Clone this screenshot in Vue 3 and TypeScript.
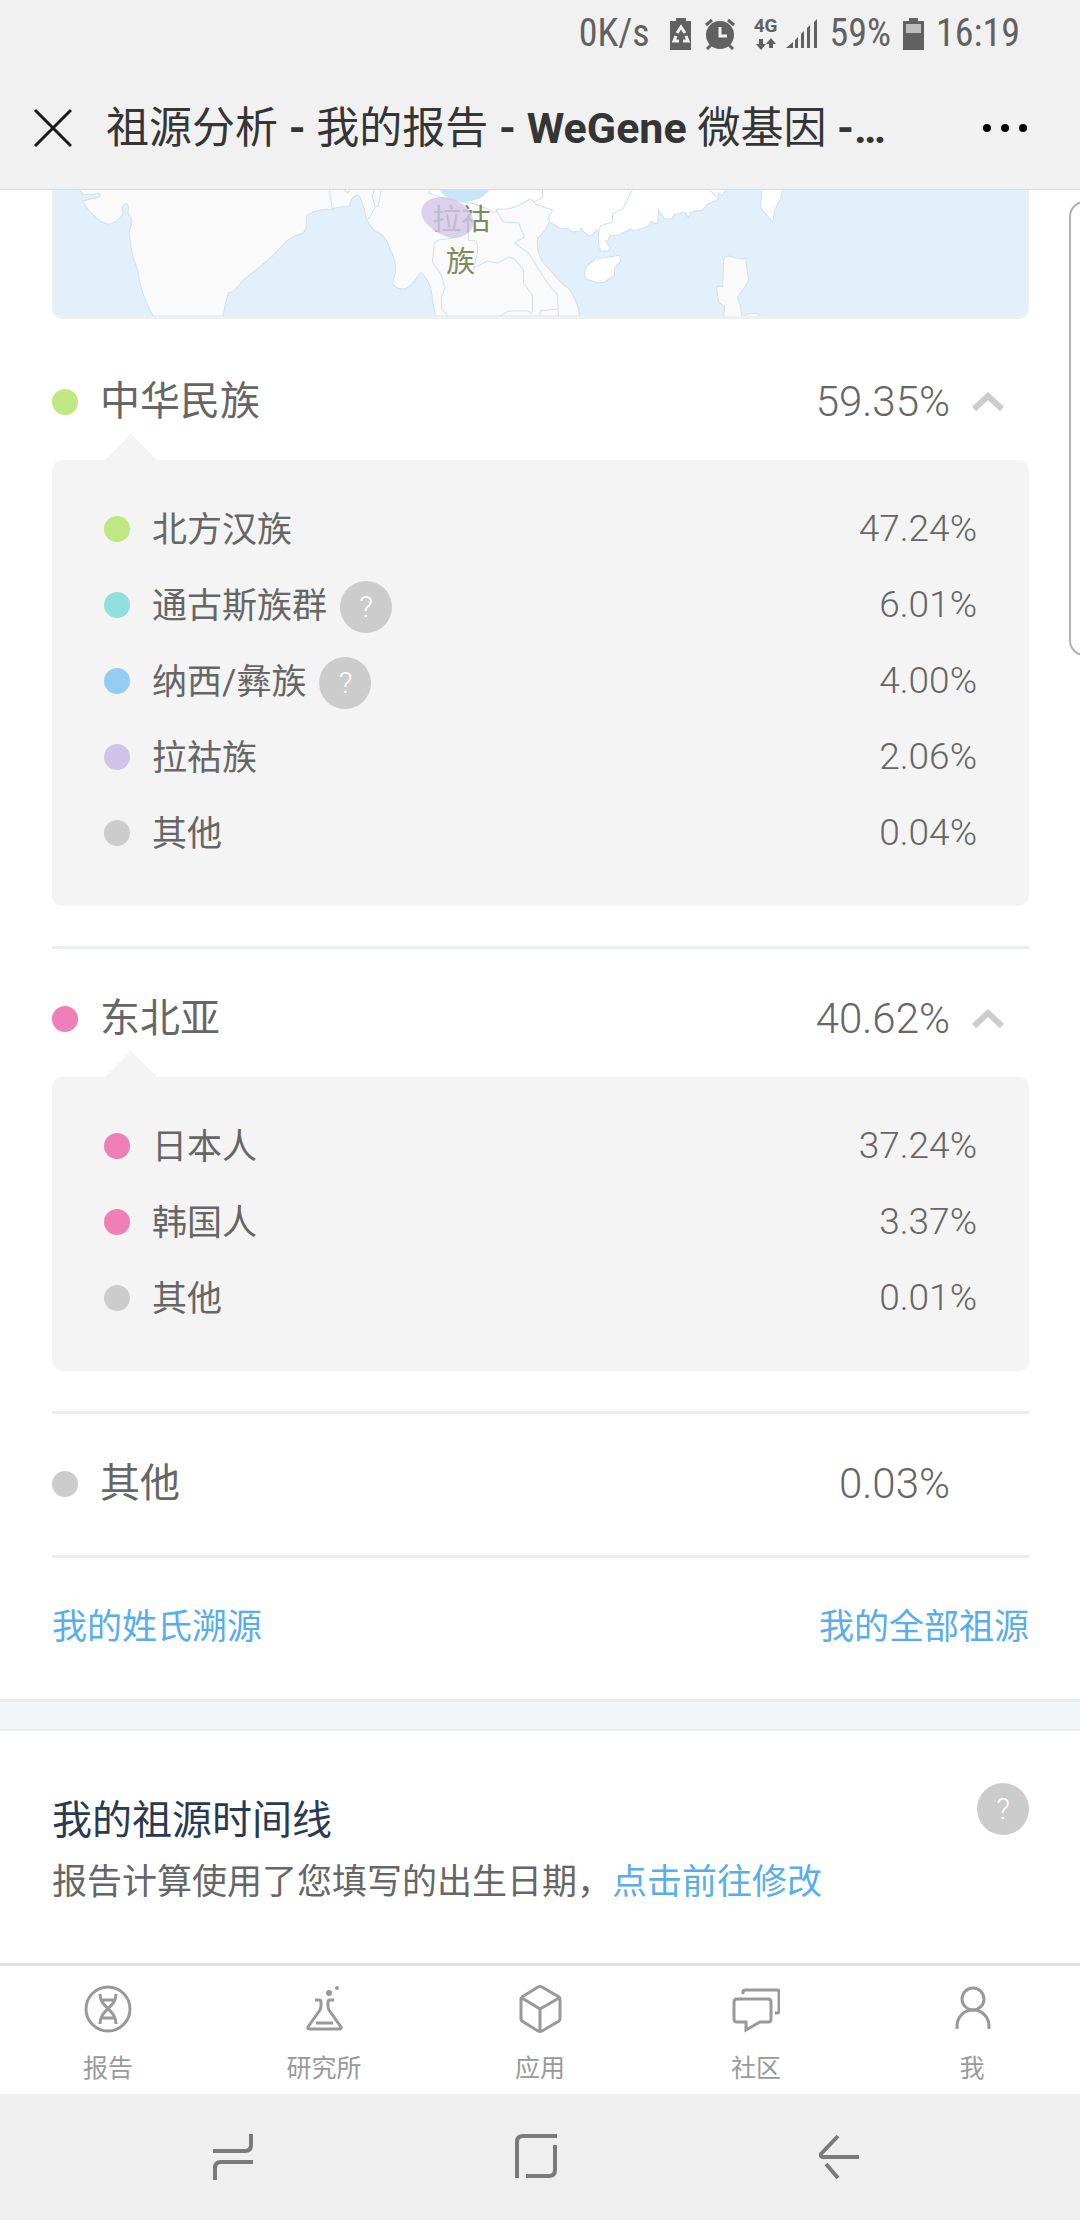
<script setup lang="ts">
import { reactive } from 'vue'

interface Item {
  name: string
  value: string
  color: string
  help?: boolean
}

interface Group extends Item {
  open: boolean
  items: Item[]
}

const groups = reactive<Group[]>([
  {
    name: '中华民族',
    value: '59.35%',
    color: '#c0e882',
    open: true,
    items: [
      { name: '北方汉族', value: '47.24%', color: '#c0e882' },
      { name: '通古斯族群', value: '6.01%', color: '#8fdfdf', help: true },
      { name: '纳西/彝族', value: '4.00%', color: '#93cef2', help: true },
      { name: '拉祜族', value: '2.06%', color: '#d0c4ea' },
      { name: '其他', value: '0.04%', color: '#cccccc' },
    ],
  },
  {
    name: '东北亚',
    value: '40.62%',
    color: '#ee80b7',
    open: true,
    items: [
      { name: '日本人', value: '37.24%', color: '#ee80b7' },
      { name: '韩国人', value: '3.37%', color: '#ee80b7' },
      { name: '其他', value: '0.01%', color: '#cccccc' },
    ],
  },
  { name: '其他', value: '0.03%', color: '#cccccc', open: false, items: [] },
])

function toggle(group: Group) {
  if (group.items.length) group.open = !group.open
}
</script>

<template>
  <div class="app">
    <header class="top">
      <div class="status">
        <span class="speed">0K/s</span>
        <svg class="st-battery" width="22" height="32" viewBox="0 0 22 32">
          <path d="M6 0h10v3h5v29H0V3h6z" fill="#616161" />
          <g fill="none" stroke="#f1f1f1" stroke-width="3">
            <path d="M7 15l4-6 4 6" />
            <path d="M16 18l2 5h-5" />
            <path d="M6 18l-2 5h5" />
          </g>
        </svg>
        <svg class="st-alarm" width="32" height="32" viewBox="0 0 32 32">
          <circle cx="16" cy="17" r="14" fill="#616161" />
          <path d="M2 7l6-5M30 7l-6-5M3 31l4-4M29 31l-4-4" stroke="#616161" stroke-width="3" fill="none" />
          <path d="M16 9v9h7" stroke="#f1f1f1" stroke-width="3" fill="none" />
        </svg>
        <span class="net">
          <span class="net-type">4G</span>
          <svg width="20" height="12" viewBox="0 0 20 12" fill="#616161">
            <path d="M3 1h4v5h3l-5 6-5-6h3z" />
            <path d="M13 10h4V6h3l-5-6-5 6h3z" />
          </svg>
        </span>
        <svg class="st-signal" width="32" height="30" viewBox="0 0 32 30" fill="#616161">
          <path d="M0 29l7-6v6zM9 21l3-3v11H9zM15 15l3-3v17h-3zM21 9l3-3v23h-3zM28 3l3-3v29h-3z" />
        </svg>
        <span class="level">59%</span>
        <svg class="st-charge" width="21" height="32" viewBox="0 0 21 32">
          <path d="M6 0h9v3h6v29H0V3h6z" fill="#616161" />
          <path d="M3 6h15v9H3z" fill="#bdbdbd" />
        </svg>
        <span class="clock">16:19</span>
      </div>
      <div class="bar">
        <button class="icon-btn close" type="button" aria-label="关闭">
          <svg width="38" height="38" viewBox="0 0 38 38" fill="none" stroke="#1a1a1a" stroke-width="3">
            <path d="M1 1l36 36M37 1L1 37" />
          </svg>
        </button>
        <h1 class="title">祖源分析<b> - </b>我的报告<b> - WeGene </b>微基因<b> -…</b></h1>
        <button class="icon-btn more" type="button" aria-label="更多">
          <svg width="46" height="10" viewBox="0 0 46 10">
            <circle cx="5" cy="5" r="4" />
            <circle cx="23" cy="5" r="4" />
            <circle cx="41" cy="5" r="4" />
          </svg>
        </button>
      </div>
    </header>

    <main class="content">
      <section class="origin">
        <div class="map">
          <svg viewBox="0 0 970 126" preserveAspectRatio="xMidYMid slice" stroke="#cfe1ed" stroke-width="1">
            <path
              fill="#fafafa"
              d="M24 -1L28 4 35 5 40 4Q45 2 45 5 45 8 42 8L35 9 28 11Q30 17 40 27 47 34 54 34 62 33 68 24L67 18Q69 13 72 14 74 15 73 23L77 31 74 43 76 57Q77 66 82 78 86 106 98 126H168L170 115 173 103Q180 102 188 90L213 70Q222 62 230 52 236 47 248 43L251 38V27Q252 23 265 20L277 19Q284 16 290 17 295 17 295 13 297 6 302 5 306 6 309 20 312 36 321 42 330 44 335 60 341 70 340 82L337 94Q342 99 348 99 354 99 365 83 366 81 373 92 377 102 377 110L380 126H524Q523 112 513 98L507 94 488 73Q481 64 482 48 489 43 494 32L497 20 485 -1Z"
            />
            <path
              fill="#ffffff"
              d="M375 -1L373 3 387 8 420 14 430 18 438 23 443 19 453 19 462 16 475 9 480 14 497 20 493 27 494 32 506 39 511 38 518 42 524 41 526 38 528 42 532 45 535 46 541 40 543 43 543 53 545 61H553L555 58 550 51 553 50 554 46 563 45 575 39 579 41 588 38 594 35 595 32 602 34 603 20 609 29 616 29 619 24 624 24 627 22 630 23 633 28 635 22 647 20 652 14 662 10 663 3 666 6 671 -1Z"
            />
            <path fill="#ffffff" d="M539 70L538 69 554 67 564 65 565 71 559 78 559 85 549 92 543 93 530 89 529 82 531 76Z" />
            <path fill="#ffffff" d="M706 -1L705 18 717 32 719 20 725 8 727 -1Z" />
            <path
              fill="#fafafa"
              d="M668 127L669 117 663 112 661 98 662 96 667 97 668 70Q669 66 673 66L685 69 690 68 691 78 693 90 691 94 682 107 685 117 686 127ZM688 127L692 124 700 123 706 127Z"
            />
            <g fill="none">
              <path d="M274 -1L277 19M289 -1L292 3 296 -1M319 -1L317 7 320 17 313 29M326 -1L323 16 320 17" />
              <path d="M405 40L398 48 383 50 379 53 377 72 387 87 388 94 390 97 386 107V118L393 127" />
              <path d="M413 43V50L420 51 422 55V63L418 78 432 71 442 73 453 67 459 69 468 80V93L477 105V123" />
              <path d="M441 21L448 32 463 33 469 47 459 53 473 63 492 93 502 105 503 127M443 127L453 121 472 121 477 124M484 127L485 121 502 119" />
              <path d="M487 -1V8L478 12M577 -1L568 18 557 24V32L545 36 543 43M653 -1L661 7" />
            </g>
            <ellipse cx="409" cy="-12" rx="29" ry="24" fill="#c8e5f7" stroke="none" />
            <g class="map-label" stroke="none" text-anchor="middle">
              <text x="406" y="40">拉祜</text>
              <text x="405" y="82">族</text>
            </g>
            <path
              fill="#d3c5ea"
              fill-opacity="0.8"
              stroke="none"
              d="M366 22C366 12 376 7 386 7C399 6 418 18 418 32C418 42 408 48 398 48C385 47 366 34 366 22Z"
            />
          </svg>
        </div>

        <div v-for="(group, i) in groups" :key="i" class="group">
          <button class="group-head" type="button" :aria-expanded="group.open" @click="toggle(group)">
            <span class="dot" :style="{ background: group.color }"></span>
            <span class="group-name">{{ group.name }}</span>
            <span class="group-value">{{ group.value }}</span>
            <span class="chevron">
              <svg v-if="group.items.length" width="32" height="22" viewBox="0 0 32 22" :class="{ closed: !group.open }">
                <path d="M2 18L16 5l14 13" fill="none" stroke="#cccccc" stroke-width="6" />
              </svg>
            </span>
          </button>
          <ul v-if="group.open" class="panel">
            <li v-for="(item, j) in group.items" :key="j" class="item">
              <span class="dot" :style="{ background: item.color }"></span>
              <span class="item-name">{{ item.name }}</span>
              <button v-if="item.help" class="help" type="button">?</button>
              <span class="item-value">{{ item.value }}</span>
            </li>
          </ul>
        </div>

        <nav class="links">
          <a href="#surname">我的姓氏溯源</a>
          <a href="#all">我的全部祖源</a>
        </nav>
      </section>

      <section class="timeline">
        <div class="timeline-text">
          <h2>我的祖源时间线</h2>
          <p>报告计算使用了您填写的出生日期，<a href="#birthday">点击前往修改</a></p>
        </div>
        <button class="help" type="button">?</button>
      </section>
    </main>

    <nav class="tabs">
      <a href="#report" class="tab">
        <svg viewBox="0 0 48 48">
          <circle cx="24" cy="24" r="22" />
          <path d="M16 9C16 23 32 24 32 39M32 9C32 23 16 24 16 39M18 15h12M18 33h12" />
        </svg>
        <span>报告</span>
      </a>
      <a href="#lab" class="tab">
        <svg viewBox="0 0 48 48">
          <path d="M15 15h4q2 0 2 2v4q0 2-1 4L8 42q-1 2 2 2h29q3 0 2-2L29 25q-1-2-1-4v-4q0-2 2-2h4M16 38h17" />
          <circle cx="29" cy="8" r="3" class="solid" />
          <circle cx="37" cy="3" r="2" class="solid" />
        </svg>
        <span>研究所</span>
      </a>
      <a href="#apps" class="tab">
        <svg viewBox="0 0 48 48">
          <path d="M22 2q2-1 4 0l17 10q1 1 1 2v20q0 1-1 2L26 46q-2 1-4 0L6 36q-1-1-1-2V14q0-1 1-2zM6 13l18 11 19-11M24 24v22" />
        </svg>
        <span>应用</span>
      </a>
      <a href="#community" class="tab">
        <svg viewBox="0 0 48 48">
          <path d="M5 14h31q3 0 3 3v17q0 3-3 3h-8l-14 8v-8H5q-3 0-3-3V17q0-3 3-3z" />
          <path d="M11 9V7q0-2 2-2h32q2 0 2 2v19q0 2-2 2h-2" />
        </svg>
        <span>社区</span>
      </a>
      <a href="#me" class="tab">
        <svg viewBox="0 0 48 48">
          <circle cx="25" cy="14" r="11" />
          <path d="M9 44v-3C9 32 16 25 25 25s16 7 16 16v3" />
        </svg>
        <span>我</span>
      </a>
    </nav>

    <div class="system">
      <button class="icon-btn" type="button" aria-label="最近任务">
        <svg width="42" height="48" viewBox="0 0 42 48">
          <path d="M1 18h32q6 0 6-6V1M41 29H9q-6 0-6 6v12" />
        </svg>
      </button>
      <button class="icon-btn" type="button" aria-label="主屏幕">
        <svg width="42" height="48" viewBox="0 0 42 48">
          <path d="M2 45V9q0-6 6-6h34M11 43h23q6 0 6-6V12" />
        </svg>
      </button>
      <button class="icon-btn" type="button" aria-label="返回">
        <svg width="42" height="48" viewBox="0 0 42 48">
          <path d="M20 3L3 21q-1 3 2 3h36M8 31l12 14" />
        </svg>
      </button>
    </div>

    <div class="edge-handle"></div>
  </div>
</template>

<style>
body {
  background: #ffffff;
}
</style>

<style scoped>
.app {
  position: relative;
  display: flex;
  flex-direction: column;
  min-height: 100vh;
  overflow: hidden;
  background: #ffffff;
  color: #666666;
  font-family: Roboto, 'Noto Sans CJK SC', sans-serif;
}

button {
  padding: 0;
  border: 0;
  background: none;
  color: inherit;
  font: inherit;
  cursor: pointer;
}

a {
  color: #57aeeb;
  text-decoration: none;
}

svg {
  display: block;
  flex: none;
}

.top {
  border-bottom: 1px solid #d8dadb;
  background: #f1f1f1;
}

.status {
  display: flex;
  align-items: center;
  justify-content: flex-end;
  height: 67px;
  padding-right: 60px;
  color: #616161;
  font-family: 'Roboto Condensed', Roboto, sans-serif;
  font-size: 38px;
  line-height: 67px;
}

.st-battery {
  margin-left: 20px;
}

.st-alarm {
  margin-left: 12px;
}

.net {
  display: flex;
  flex-direction: column;
  align-items: center;
  gap: 4px;
  margin-left: 18px;
}

.net-type {
  font-family: Roboto, sans-serif;
  font-size: 19px;
  font-weight: 700;
  line-height: 16px;
}

.st-signal {
  margin-left: 8px;
}

.level,
.st-charge,
.clock {
  margin-left: 12px;
}

.bar {
  display: flex;
  align-items: center;
  height: 122px;
  padding: 0 52px 0 34px;
}

.icon-btn {
  display: flex;
  align-items: center;
  justify-content: center;
}

.title {
  flex: 1;
  margin: 0 0 0 34px;
  color: #353535;
  font-size: 43px;
  font-weight: 400;
  line-height: 60px;
  white-space: nowrap;
}

.title b {
  font-weight: 700;
}

.content {
  flex: 1;
}

.origin {
  padding: 0 51px 0 52px;
}

.origin::after {
  display: block;
  height: 27px;
  margin: 0 -52px;
  border-top: 3px solid #e9edf0;
  border-bottom: 2px solid #e9edf0;
  background: #f3f6f9;
  content: '';
}

.map {
  overflow: hidden;
  margin-bottom: 13px;
  border: 3px solid #edf0f2;
  border-top: 0;
  border-radius: 0 0 10px 10px;
  background: #e1f0fa;
}

.map svg {
  width: 100%;
  height: 126px;
}

.map-label {
  fill: #7d8a5b;
  font-size: 29px;
}

.group {
  padding: 14px 0 0;
  border-bottom: 3px solid #e9edf0;
}

.group-head {
  display: flex;
  align-items: center;
  width: 100%;
  height: 112px;
  margin-bottom: 2px;
  text-align: left;
}

.group:nth-last-child(2) .group-head {
  margin-bottom: 15px;
}

.dot {
  flex: none;
  width: 26px;
  height: 26px;
  border-radius: 50%;
}

.group-name {
  flex: 1;
  margin-left: 22px;
  font-size: 40px;
  line-height: 52px;
}

.group-value {
  font-size: 42px;
  font-weight: 300;
  line-height: 52px;
}

.chevron {
  width: 32px;
  margin: 0 25px 0 22px;
}

.closed {
  transform: rotate(180deg);
}

.panel {
  position: relative;
  margin: 0 0 40px;
  padding: 31px 52px 35px;
  border-radius: 10px;
  background: #f4f4f4;
  list-style: none;
}

.panel::before {
  position: absolute;
  top: -26px;
  left: 53px;
  border: 26px solid transparent;
  border-top: 0;
  border-bottom-color: #f4f4f4;
  content: '';
}

.item {
  display: flex;
  align-items: center;
  height: 76px;
}

.item-name {
  margin-left: 22px;
  padding-top: 3px;
  font-size: 35px;
  line-height: 52px;
}

.item-value {
  margin-left: auto;
  font-size: 37px;
  font-weight: 300;
  line-height: 52px;
}

.help {
  flex: none;
  width: 52px;
  height: 52px;
  border-radius: 50%;
  background: #cccccc;
  color: #ffffff;
  font-size: 30px;
  font-weight: 300;
  line-height: 52px;
}

.item .help {
  margin: 4px 0 0 13px;
}

.links {
  display: flex;
  align-items: center;
  justify-content: space-between;
  height: 141px;
  font-size: 35px;
  line-height: 52px;
}

.links a {
  margin-bottom: 2px;
}

.timeline {
  display: flex;
  align-items: flex-start;
  justify-content: space-between;
  padding: 52px 51px 49px 52px;
}

.timeline-text {
  padding-top: 7px;
}

.timeline h2 {
  margin: 0;
  color: #2a3a52;
  font-size: 40px;
  font-weight: 400;
  line-height: 62px;
}

.timeline p {
  margin: 0;
  font-size: 35px;
  line-height: 62px;
}

.tabs {
  display: flex;
  border-top: 3px solid #dfe2e5;
}

.tab {
  display: flex;
  flex: 1;
  flex-direction: column;
  align-items: center;
  gap: 18px;
  padding: 19px 0 7px;
  color: #999999;
  font-size: 25px;
  line-height: 36px;
}

.tab svg {
  width: 48px;
  height: 48px;
  fill: none;
  stroke: #999999;
  stroke-width: 3;
}

.tab .solid {
  fill: #999999;
  stroke: none;
}

.system {
  display: grid;
  grid-template-columns: repeat(3, 1fr);
  height: 126px;
  padding: 0 90px 0 82px;
  background: #efefef;
}

.system svg {
  fill: none;
  stroke: #7a7a7a;
  stroke-width: 4;
}

.edge-handle {
  position: absolute;
  top: 201px;
  right: -20px;
  width: 27px;
  height: 451px;
  border: 2px solid #b0b0b0;
  border-radius: 20px;
  background: #ffffff;
}
</style>
